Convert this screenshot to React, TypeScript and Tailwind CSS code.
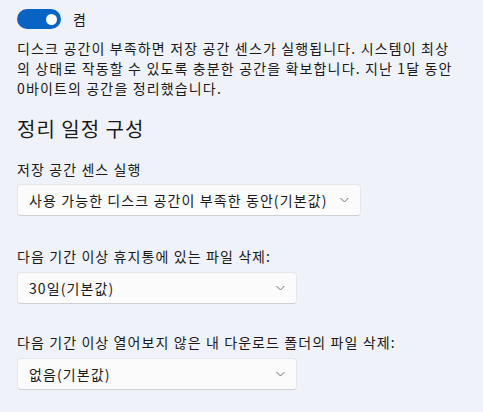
import { useState } from 'react';

const font = { fontFamily: '"Noto Sans CJK KR", "Noto Sans", sans-serif' };

function Chevron() {
  return (
    <svg width="9" height="6" viewBox="0 0 9 6" className="shrink-0">
      <path d="M0.5 1 L4.5 5 L8.5 1" fill="none" stroke="#707070" strokeWidth="1" />
    </svg>
  );
}

function Select({ value, width }: { value: string; width: string }) {
  return (
    <button
      className={`${width} h-8 flex items-center justify-between pl-[11px] pr-[11px] bg-[#fbfbfc] border border-[#e4e6e9] border-b-[#cdd0d4] rounded-[4px] text-[14px] tracking-[1.1px] text-[#1a1a1a] leading-none`}
    >
      <span>{value}</span>
      <Chevron />
    </button>
  );
}

export default function App() {
  const [on, setOn] = useState(true);

  return (
    <div
      className="w-[483px] h-[412px] overflow-hidden bg-[#eff3f9] pl-[17px] text-[#1a1a1a]"
      style={font}
    >
      {/* Storage Sense toggle */}
      <div className="flex items-center mt-[9px] h-[20px]">
        <button
          onClick={() => setOn(!on)}
          className={`w-[44px] h-[20px] rounded-full flex items-center px-[4px] ${
            on ? 'bg-[#0864c4] justify-end' : 'bg-gray-300 justify-start'
          }`}
        >
          <span className="w-[11px] h-[11px] rounded-full bg-white" />
        </button>
        <span className="ml-[12px] text-[14px] leading-none">켬</span>
      </div>

      <p className="mt-[9px] text-[14px] leading-[20px] tracking-[1.15px]">
        <span className="block">디스크 공간이 부족하면 저장 공간 센스가 실행됩니다. 시스템이 최상</span>
        <span className="block">의 상태로 작동할 수 있도록 충분한 공간을 확보합니다. 지난 1달 동안</span>
        <span className="block">0바이트의 공간을 정리했습니다.</span>
      </p>

      <h2 className="mt-[17px] text-[20px] leading-[28px] tracking-[1px]">정리 일정 구성</h2>

      <div className="mt-[16px] text-[14px] leading-[20px] tracking-[1.1px]">저장 공간 센스 실행</div>
      <div className="mt-[5px]">
        <Select value="사용 가능한 디스크 공간이 부족한 동안(기본값)" width="w-[344px]" />
      </div>

      <div className="mt-[30px] text-[14px] leading-[20px] tracking-[1.1px]">
        다음 기간 이상 휴지통에 있는 파일 삭제:
      </div>
      <div className="mt-[6px]">
        <Select value="30일(기본값)" width="w-[280px]" />
      </div>

      <div className="mt-[28px] text-[14px] leading-[20px] tracking-[1.1px]">
        다음 기간 이상 열어보지 않은 내 다운로드 폴더의 파일 삭제:
      </div>
      <div className="mt-[6px]">
        <Select value="없음(기본값)" width="w-[280px]" />
      </div>
    </div>
  );
}
